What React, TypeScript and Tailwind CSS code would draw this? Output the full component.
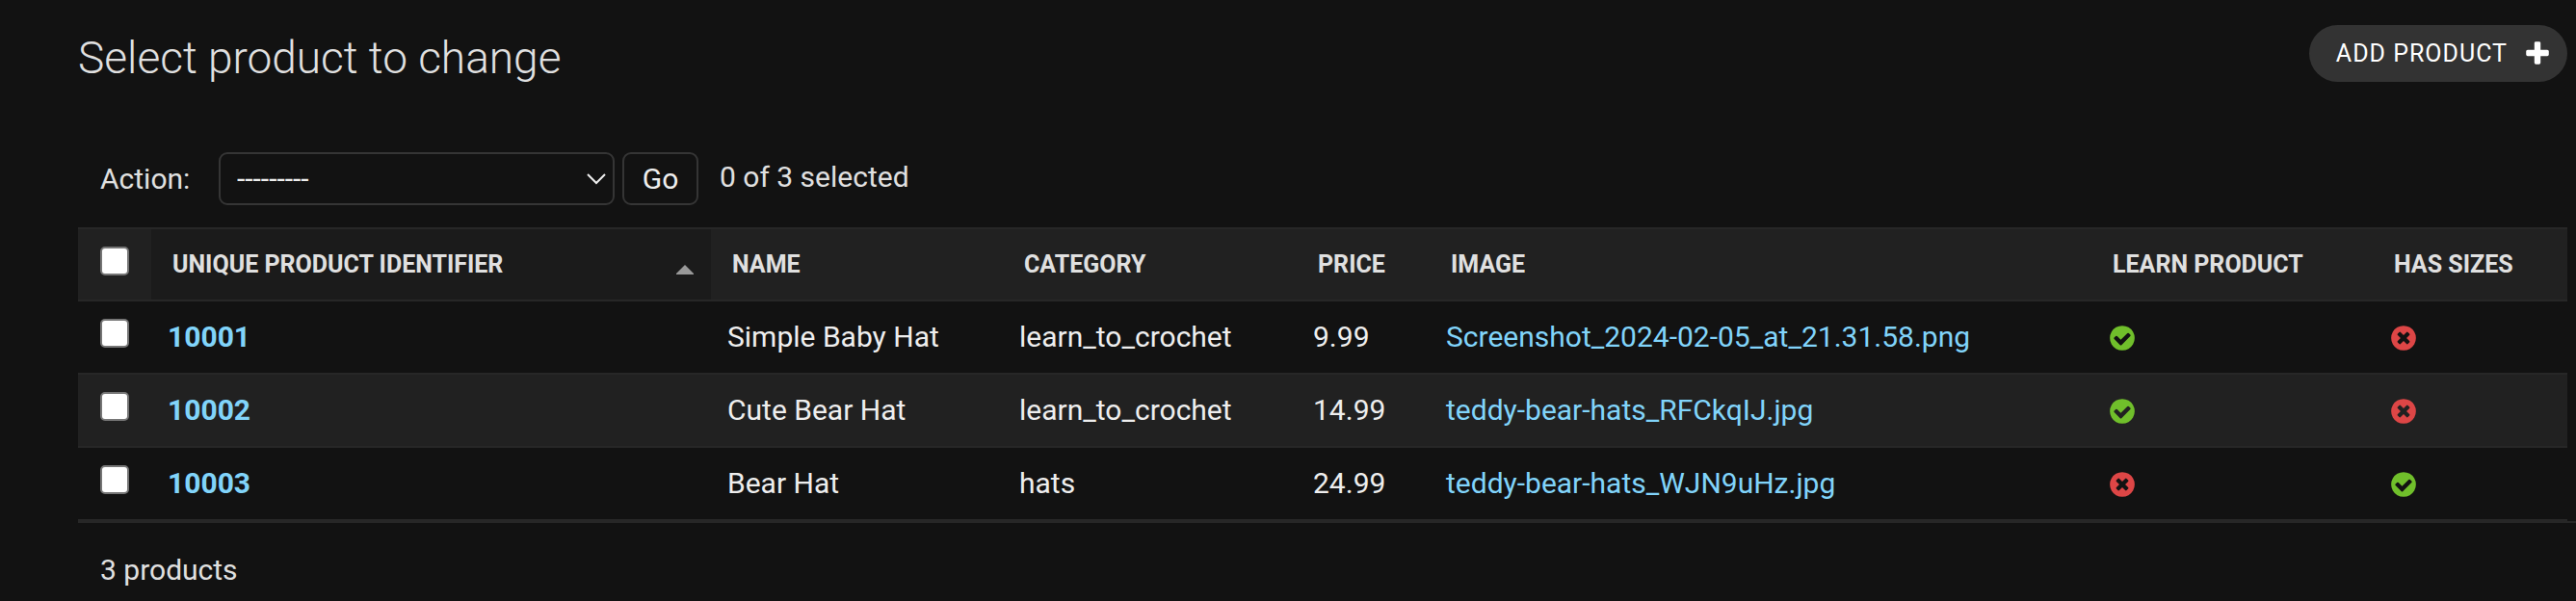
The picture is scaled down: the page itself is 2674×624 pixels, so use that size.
import { useState } from "react";

type Product = {
  id: string;
  name: string;
  category: string;
  price: string;
  image: string;
  learn: boolean;
  sizes: boolean;
};

const PRODUCTS: Product[] = [
  { id: "10001", name: "Simple Baby Hat", category: "learn_to_crochet", price: "9.99", image: "Screenshot_2024-02-05_at_21.31.58.png", learn: true, sizes: false },
  { id: "10002", name: "Cute Bear Hat", category: "learn_to_crochet", price: "14.99", image: "teddy-bear-hats_RFCkqIJ.jpg", learn: true, sizes: false },
  { id: "10003", name: "Bear Hat", category: "hats", price: "24.99", image: "teddy-bear-hats_WJN9uHz.jpg", learn: false, sizes: true },
];

const CIRCLE =
  "q0 209-103 385.5t-279.5 279.5-385.5 103-385.5-103-279.5-279.5-103-385.5 103-385.5 279.5-279.5 385.5-103 385.5 103 279.5 279.5 103 385.5z";

function BooleanIcon({ value }: { value: boolean }) {
  return value ? (
    <svg role="img" aria-label="True" viewBox="0 0 1792 1792" className="mt-[6px] block size-[30px] fill-[#70bf2b]">
      <path d={"M1412 734q0-28-18-46l-91-90q-19-19-45-19t-45 19l-408 407-226-226q-19-19-45-19t-45 19l-91 90q-18 18-18 46 0 27 18 45l362 362q19 19 45 19 27 0 46-19l543-543q18-18 18-45zm252 162" + CIRCLE} />
    </svg>
  ) : (
    <svg role="img" aria-label="False" viewBox="0 0 1792 1792" className="mt-[6px] block size-[30px] fill-[#dd4646]">
      <path d={"M1277 1122q0-26-19-45l-181-181 181-181q19-19 19-45 0-27-19-46l-90-90q-19-19-46-19-26 0-45 19l-181 181-181-181q-19-19-45-19-27 0-46 19l-90 90q-19 19-19 46 0 26 19 45l181 181-181 181q-19 19-19 45 0 27 19 46l90 90q19 19 46 19 26 0 45-19l181-181 181 181q19 19 45 19 27 0 46-19l90-90q19-19 19-46zm387-226" + CIRCLE} />
    </svg>
  );
}

function CheckBox({ label, checked, onToggle }: { label: string; checked: boolean; onToggle: () => void }) {
  return (
    <input
      type="checkbox"
      aria-label={label}
      checked={checked}
      onChange={onToggle}
      className="block size-[30px] appearance-none rounded-[5px] border-2 border-[#767676] bg-white checked:bg-[#3b82f6]"
    />
  );
}

const TH = "border-y-2 border-[#272727] px-[22px] pt-[19px] text-left align-top font-bold";
const TD = "border-b-2 border-[#272727] px-[17px] py-[17px] align-top";

export default function App() {
  const [selected, setSelected] = useState<string[]>([]);
  const allSelected = selected.length === PRODUCTS.length;
  const toggle = (id: string) =>
    setSelected((s) => (s.includes(id) ? s.filter((x) => x !== id) : [...s, id]));

  return (
    <main className="min-h-screen bg-[#121212] font-['Roboto',sans-serif] text-[30px] leading-10 text-[#e0e0e0]">
      <header className="flex items-start justify-between pt-[26px] pr-[9px] pl-[81px]">
        <h1 className="pt-[6px] text-[46px] leading-[56px] font-light">Select product to change</h1>
        <a href="#add" className="flex h-[59px] items-center gap-4 rounded-full bg-[#333333] pr-4 pl-7 text-[25px] tracking-[1px] text-white">
          ADD PRODUCT
          <svg aria-hidden="true" viewBox="0 0 1792 1792" className="size-[30px] fill-white">
            <path d="M1600 736v192q0 40-28 68t-68 28h-416v416q0 40-28 68t-68 28h-192q-40 0-68-28t-28-68v-416h-416q-40 0-68-28t-28-68v-192q0-40 28-68t68-28h416v-416q0-40 28-68t68-28h192q40 0 68 28t28 68v416h416q40 0 68 28t28 68z" />
          </svg>
        </a>
      </header>

      <form onSubmit={(e) => e.preventDefault()} className="pl-[81px]">
        <div className="flex items-center pt-[70px] pb-[23px] pl-[23px]">
          <label htmlFor="action" className="w-[123px]">Action:</label>
          <div className="relative">
            <select id="action" className="block h-[55px] w-[411px] appearance-none rounded-[9px] border-2 border-[#353535] bg-[#121212] pr-12 pl-[17px] text-[#eeeeee]">
              <option>---------</option>
              <option>Delete selected products</option>
            </select>
            <svg aria-hidden="true" viewBox="0 0 20 12" className="pointer-events-none absolute top-[22px] right-[9px] h-3 w-5">
              <path d="M1 1l9 9 9-9" fill="none" stroke="#eeeeee" strokeWidth="2" />
            </svg>
          </div>
          <button type="submit" className="ml-2 h-[55px] w-[79px] rounded-[9px] border-2 border-[#353535] text-[#eeeeee]">Go</button>
          <span className="-mt-1 ml-[22px]">{selected.length} of {PRODUCTS.length} selected</span>
        </div>

        <div className="pr-[9px]">
          <table className="w-full table-fixed border-separate border-spacing-0">
            <colgroup>
              <col className="w-[76px]" />
              <col className="w-[581px]" />
              <col className="w-[303px]" />
              <col className="w-[305px]" />
              <col className="w-[138px]" />
              <col />
              <col className="w-[292px]" />
              <col className="w-[202px]" />
            </colgroup>
            <thead>
              <tr className="h-[77px] bg-[#212121] text-[25px] leading-9 whitespace-nowrap">
                <th scope="col" className="border-y-2 border-[#272727] pt-[18px] pl-[23px] align-top">
                  <CheckBox label="Select all products" checked={allSelected} onToggle={() => setSelected(allSelected ? [] : PRODUCTS.map((p) => p.id))} />
                </th>
                <th scope="col" aria-sort="ascending" className={TH + " bg-[#1b1b1b]"}>
                  <div className="flex items-end justify-between">
                    <a href="#sort-id">UNIQUE PRODUCT IDENTIFIER</a>
                    <svg aria-hidden="true" viewBox="0 0 18 10" className="-mr-1 mb-2 h-[10px] w-[18px] fill-[#999999]">
                      <path d="M9 0l9 9v1H0V9z" />
                    </svg>
                  </div>
                </th>
                <th scope="col" className={TH}><a href="#sort-name">NAME</a></th>
                <th scope="col" className={TH}><a href="#sort-category">CATEGORY</a></th>
                <th scope="col" className={TH}><a href="#sort-price">PRICE</a></th>
                <th scope="col" className={TH}><a href="#sort-image">IMAGE</a></th>
                <th scope="col" className={TH}><a href="#sort-learn">LEARN PRODUCT</a></th>
                <th scope="col" className={TH}><a href="#sort-sizes">HAS SIZES</a></th>
              </tr>
            </thead>
            <tbody className="text-[#eeeeee]">
              {PRODUCTS.map((p) => (
                <tr key={p.id} className="h-[76px] even:bg-[#212121]">
                  <td className="border-b-2 border-[#272727] pt-[18px] pl-[23px] align-top">
                    <CheckBox label={"Select product " + p.id} checked={selected.includes(p.id)} onToggle={() => toggle(p.id)} />
                  </td>
                  <th scope="row" className={TD + " text-left font-bold"}>
                    <a href={"#" + p.id} className="text-[#81d4fa]">{p.id}</a>
                  </th>
                  <td className={TD}>{p.name}</td>
                  <td className={TD}>{p.category}</td>
                  <td className={TD}>{p.price}</td>
                  <td className={TD}><a href={"#" + p.image} className="text-[#81d4fa]">{p.image}</a></td>
                  <td className={TD}><BooleanIcon value={p.learn} /></td>
                  <td className={TD}><BooleanIcon value={p.sizes} /></td>
                </tr>
              ))}
            </tbody>
          </table>
        </div>
        <p className="border-t-2 border-[#272727] pt-[29px] pl-[23px]">{PRODUCTS.length} products</p>
      </form>
    </main>
  );
}
